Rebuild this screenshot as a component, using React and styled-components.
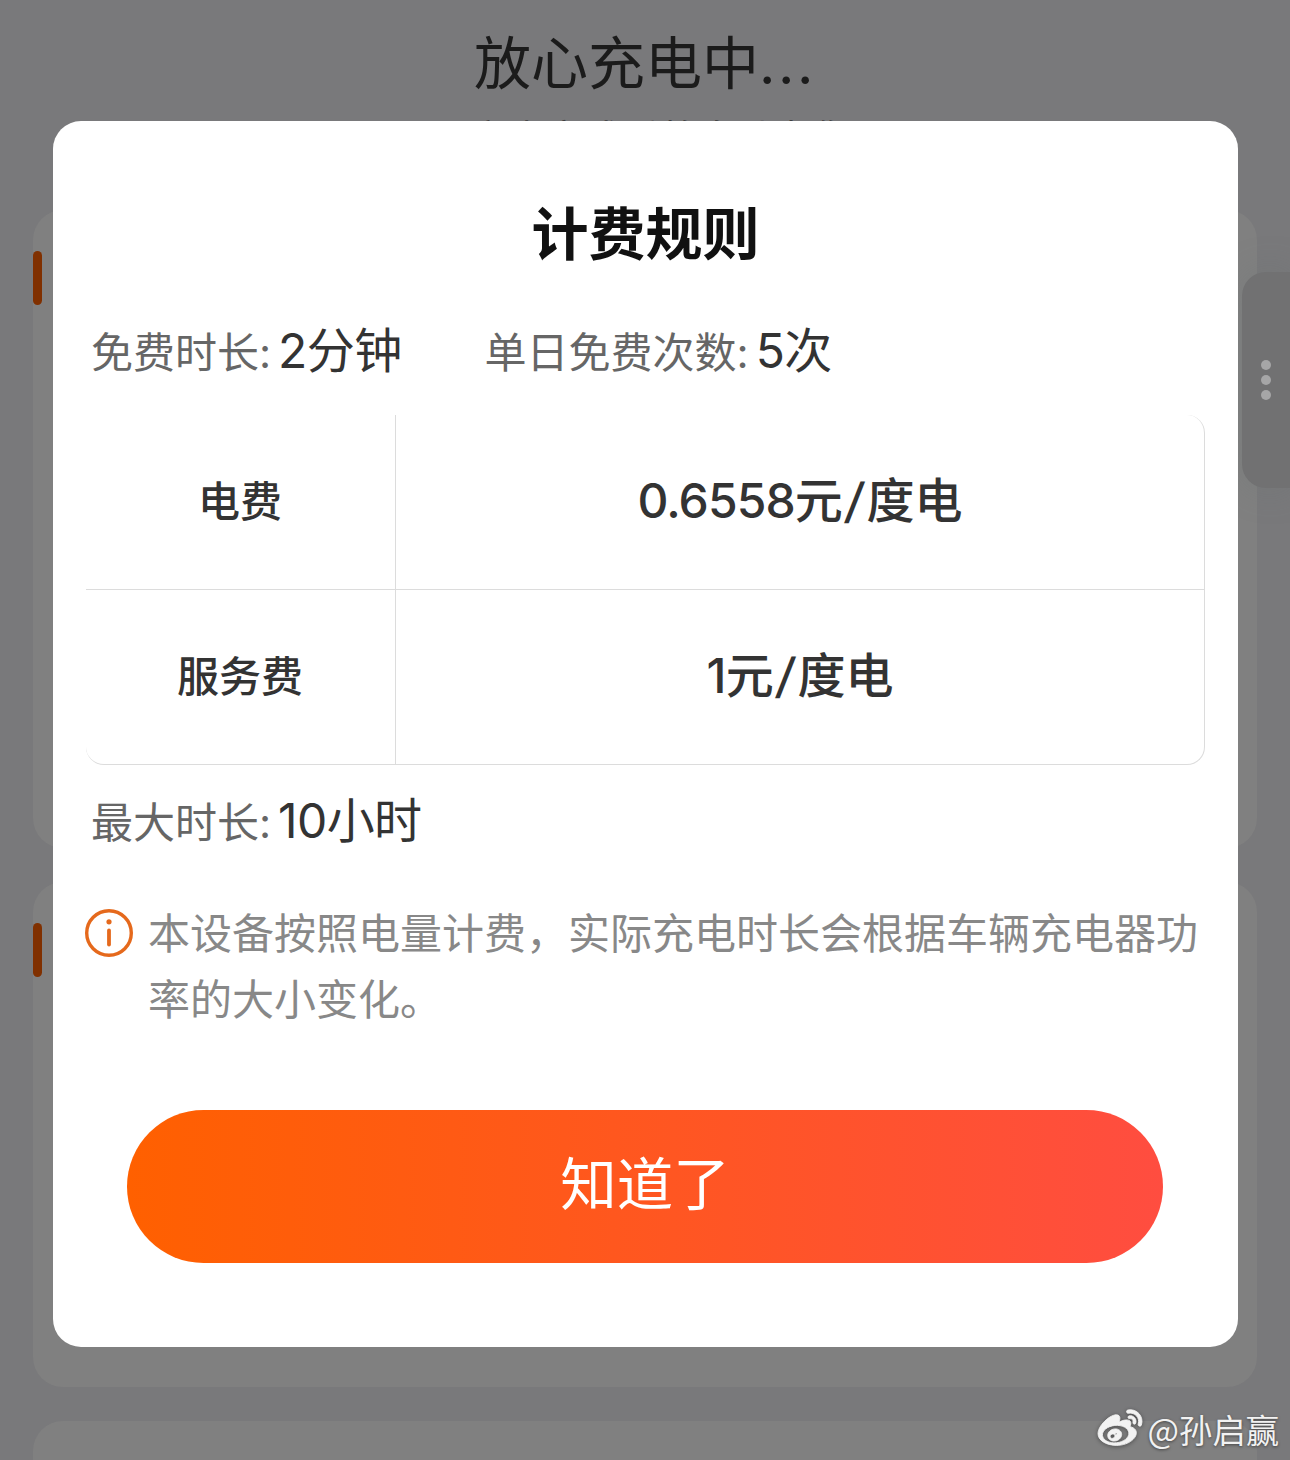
import React from "react";
import styled, { createGlobalStyle } from "styled-components";
import { FaWeibo } from "react-icons/fa";

const fees = [
  { name: "电费", amount: "0.6558" },
  { name: "服务费", amount: "1" },
];

const App = () => {
  return (
    <>
      <GlobalStyle />
      <Page>
        <Status>
          放心充电中<Ellipsis>...</Ellipsis>
        </Status>
        <SubStatus>充电完成后将自动为您</SubStatus>
        <Panels>
          <Panel $height={638}>
            <Marker />
          </Panel>
          <Panel $height={505}>
            <Marker />
          </Panel>
          <Panel $height={120} />
        </Panels>
      </Page>

      <SideHandle>
        <Dot />
        <Dot />
        <Dot />
      </SideHandle>

      <Mask>
        <Dialog>
          <Title>计费规则</Title>
          <Stats $height={142} $top={42}>
            <Stat label="免费时长:" value="2分钟" />
            <Stat label="单日免费次数:" value="5次" />
          </Stats>
          <FeeTable>
            {fees.map((fee) => (
              <FeeRow key={fee.name}>
                <FeeName>{fee.name}</FeeName>
                <FeePrice>
                  <Amount>{fee.amount}</Amount>元<Slash>/</Slash>度电
                </FeePrice>
              </FeeRow>
            ))}
          </FeeTable>
          <Stats $height={135} $top={20}>
            <Stat label="最大时长:" value="10小时" />
          </Stats>
          <Notice>
            <InfoIcon />
            <p>本设备按照电量计费，实际充电时长会根据车辆充电器功率的大小变化。</p>
          </Notice>
          <ConfirmButton>知道了</ConfirmButton>
        </Dialog>
      </Mask>

      <Watermark>
        <FaWeibo size={44} />
        <span>@孙启赢</span>
      </Watermark>
    </>
  );
};

const Stat = ({ label, value }) => (
  <StatItem>
    <StatLabel>{label}</StatLabel>
    <StatValue>{value}</StatValue>
  </StatItem>
);

const InfoIcon = () => (
  <svg width="48" height="48" viewBox="0 0 48 48" fill="none">
    <circle cx="24" cy="24" r="22.3" stroke="#e5691c" strokeWidth="3.4" />
    <circle cx="24" cy="12.8" r="2.6" fill="#e5691c" />
    <path d="M24 21.5V35.5" stroke="#e5691c" strokeWidth="3.8" strokeLinecap="round" />
  </svg>
);

const GlobalStyle = createGlobalStyle`
  * {
    box-sizing: border-box;
    margin: 0;
  }

  body {
    height: 1460px;
    overflow: hidden;
    background: #79797b;
    font-family: Inter, "Noto Sans CJK SC", sans-serif;
  }
`;

const Page = styled.main`
  height: 1460px;
  overflow: hidden;
  padding: 22px 33px 0;
  text-align: center;
`;

const Status = styled.h1`
  height: 84px;
  line-height: 84px;
  font-size: 57px;
  font-weight: 400;
  color: #1b1b1b;
`;

const Ellipsis = styled.span`
  letter-spacing: 2.5px;
`;

const SubStatus = styled.p`
  height: 104px;
  padding: 7px 0 0 30px;
  font-size: 38px;
  line-height: 50px;
  color: #3f3f40;
`;

const Panels = styled.div`
  display: flex;
  flex-direction: column;
  gap: 34px;
`;

const Panel = styled.section`
  height: ${({ $height }) => $height}px;
  padding-top: 41px;
  border-radius: 30px;
  background: #808080;
`;

const Marker = styled.div`
  width: 9px;
  height: 54px;
  border-radius: 5px;
  background: #803000;
`;

const SideHandle = styled.aside`
  position: absolute;
  top: 272px;
  right: 0;
  width: 48px;
  height: 216px;
  display: flex;
  flex-direction: column;
  align-items: center;
  justify-content: center;
  gap: 5px;
  border-radius: 24px 0 0 24px;
  background: #717172;
  box-shadow: 0 0 36px rgba(100, 110, 112, 0.25);
`;

const Dot = styled.span`
  width: 10px;
  height: 10px;
  border-radius: 50%;
  background: #a6a6a7;
`;

const Mask = styled.div`
  position: absolute;
  inset: 0;
  height: 1460px;
  padding: 121px 52px 0 53px;
`;

const Dialog = styled.div`
  height: 1226px;
  padding: 72px 33px 0;
  border-radius: 28px;
  background: #fff;
`;

const Title = styled.h2`
  height: 80px;
  line-height: 83px;
  text-align: center;
  font-size: 57px;
  font-weight: 700;
  color: #111;
`;

const Stats = styled.div`
  display: flex;
  gap: 83px;
  height: ${({ $height }) => $height}px;
  padding: ${({ $top }) => $top}px 5px 0;
`;

const StatItem = styled.div`
  display: flex;
  align-items: baseline;
  gap: 7px;
  height: 72px;
  line-height: 72px;
  white-space: nowrap;
`;

const StatLabel = styled.span`
  font-size: 42px;
  color: #666;
`;

const StatValue = styled.span`
  font-size: 48px;
  letter-spacing: -0.6px;
  color: #333;
`;

const FeeTable = styled.div`
  height: 350px;
  border: solid #dcdcdc;
  border-width: 0 1px 1px 0;
  border-radius: 18px;
  overflow: hidden;
`;

const FeeRow = styled.div`
  display: grid;
  grid-template-columns: 310px 1fr;
  height: 174px;
  text-align: center;
  font-weight: 500;
  color: #333;

  & + & {
    height: 175px;
    border-top: 1px solid #dcdcdc;
  }
`;

const FeeName = styled.div`
  padding-right: 1px;
  font-size: 42px;
  line-height: 174px;
  border-right: 1px solid #dcdcdc;
`;

const FeePrice = styled.div`
  font-size: 48px;
  line-height: 171px;
`;

const Amount = styled.span`
  letter-spacing: -0.9px;
`;

const Slash = styled.span`
  display: inline-block;
  padding: 0 3px;
  transform: skewX(-7deg);
`;

const Notice = styled.div`
  display: flex;
  gap: 15px;
  height: 210px;

  svg {
    flex: none;
    margin: 9px 0 0 -1px;
  }

  p {
    padding-top: 1px;
    font-size: 42px;
    line-height: 66px;
    color: #888;
  }
`;

const ConfirmButton = styled.button`
  display: block;
  width: 1036px;
  height: 153px;
  margin-left: 41px;
  padding: 0 0 13px;
  border: 0;
  border-radius: 77px;
  background: linear-gradient(90deg, #ff6000, #ff4d40);
  font-family: inherit;
  font-size: 56.5px;
  color: #fff;
`;

const Watermark = styled.div`
  position: absolute;
  right: 11px;
  top: 1404px;
  display: flex;
  align-items: center;
  gap: 6px;
  height: 50px;
  font-family: "Noto Sans CJK SC", sans-serif;
  font-size: 33.3px;
  line-height: 50px;
  color: #f2f2f2;
  text-shadow: 0 1px 3px rgba(0, 0, 0, 0.5);

  svg {
    overflow: visible;
    stroke: #f2f2f2;
    stroke-width: 10px;
    filter: drop-shadow(0 1px 2px rgba(0, 0, 0, 0.4));
  }
`;

export default App;
